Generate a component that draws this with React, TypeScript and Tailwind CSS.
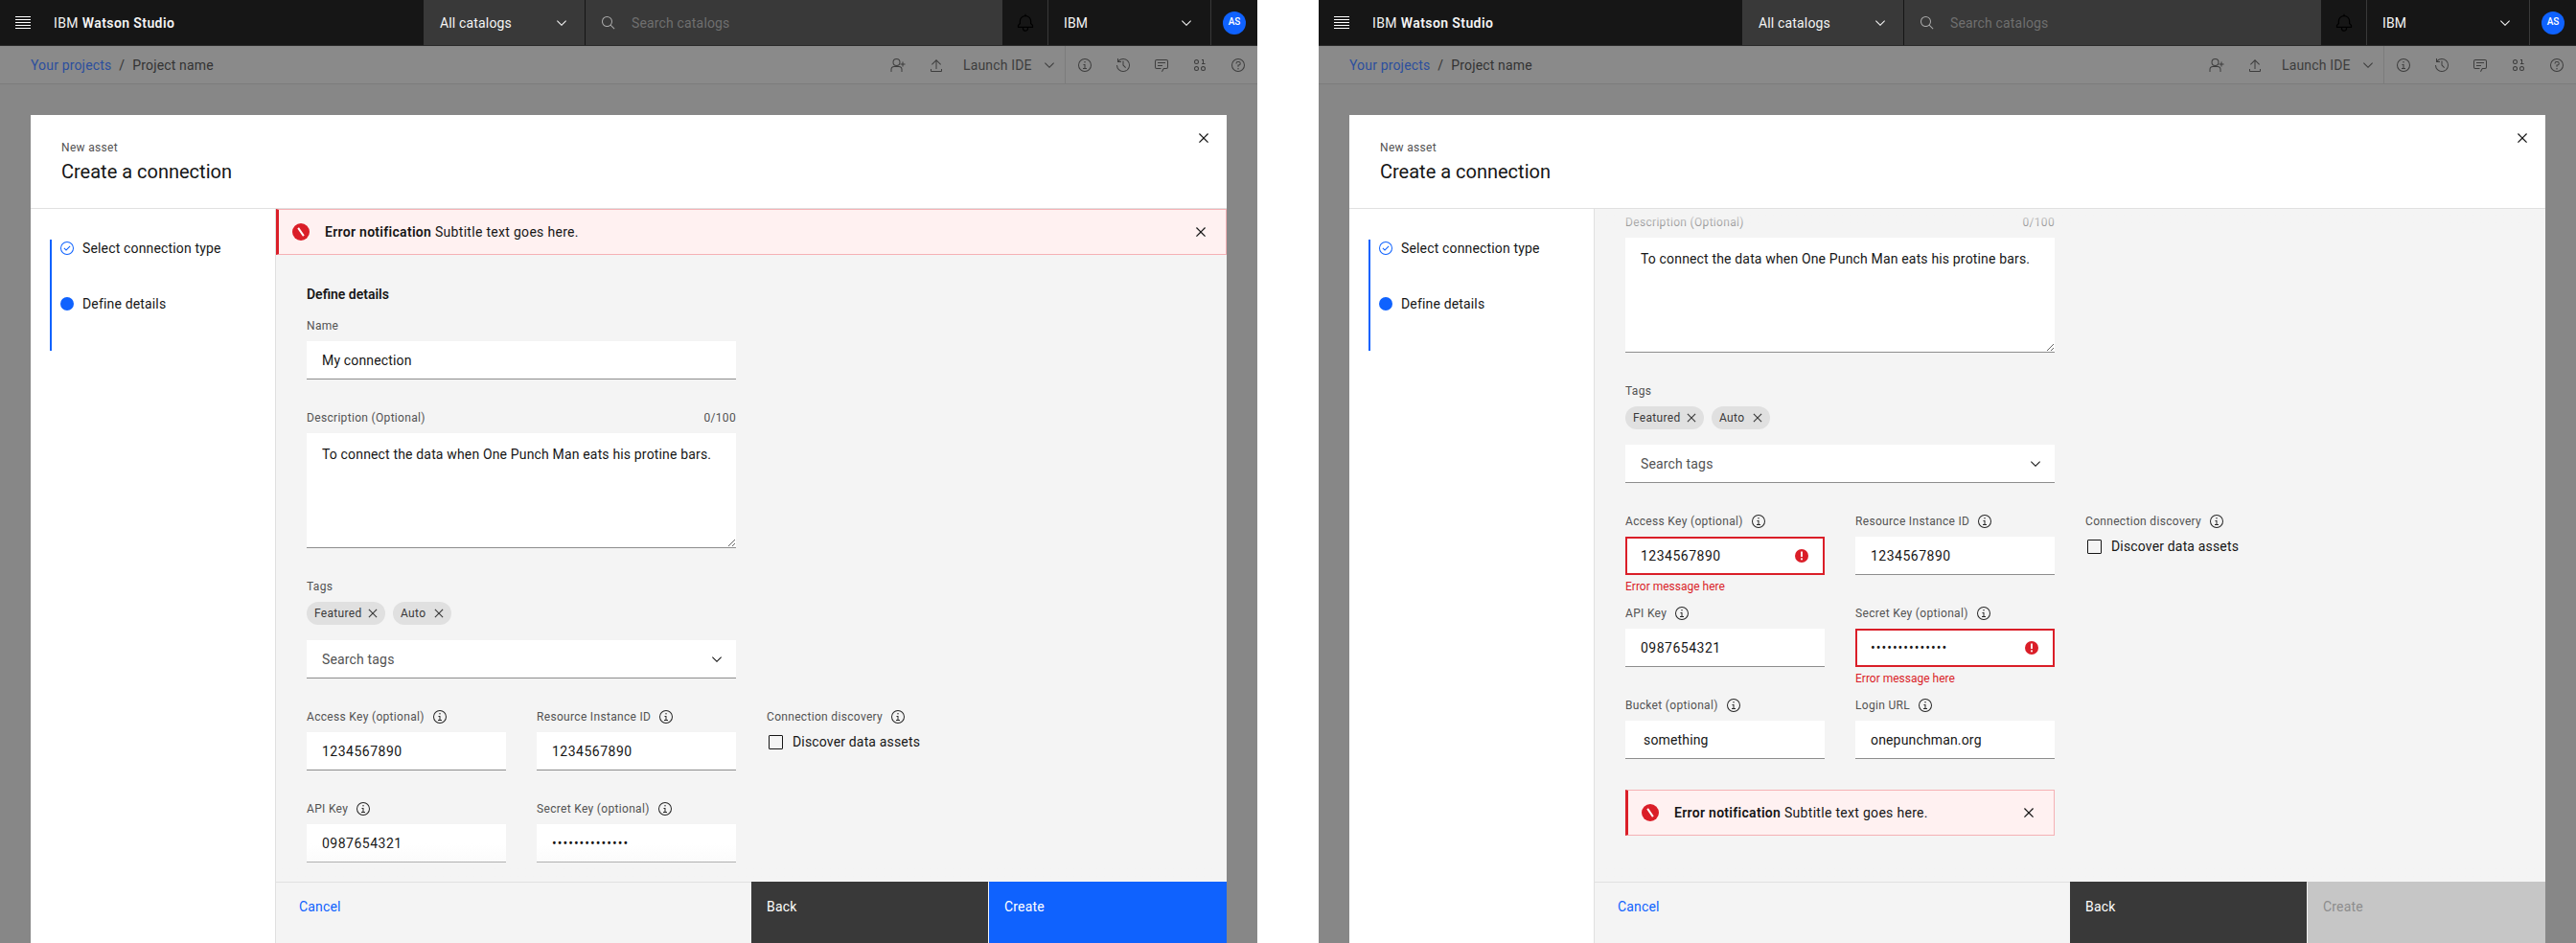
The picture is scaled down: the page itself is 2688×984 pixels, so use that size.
const ICONS: Record<string, string[]> = {
  close: ["M24 9.4L22.6 8 16 14.6 9.4 8 8 9.4 14.6 16 8 22.6 9.4 24 16 17.4 22.6 24 24 22.6 17.4 16 24 9.4z"],
  chevron: ["M16 22L6 12l1.4-1.4 8.6 8.6 8.6-8.6L26 12z"],
  search: ["M29 27.5859l-7.5521-7.5521a11.0177 11.0177 0 1 0-1.4141 1.4141L27.5859 29ZM4 13a9 9 0 1 1 9 9A9.01 9.01 0 0 1 4 13Z"],
  bell: [
    "M28.7071,19.293,26,16.5859V13a10.0136,10.0136,0,0,0-9-9.9492V1H15V3.0508A10.0136,10.0136,0,0,0,6,13v3.5859L3.2929,19.293A1,1,0,0,0,3,20v3a1,1,0,0,0,1,1h7v.7768a5.152,5.152,0,0,0,4.5,5.1987A5.0057,5.0057,0,0,0,21,25V24h7a1,1,0,0,0,1-1V20A1,1,0,0,0,28.7071,19.293ZM19,25a3,3,0,0,1-6,0V24h6Zm8-3H5V20.4141L7.707,17.707A1,1,0,0,0,8,17V13a8,8,0,0,1,16,0v4a1,1,0,0,0,.293.707L27,20.4141Z",
  ],
  info: [
    "M17 22 17 14 13 14 13 16 15 16 15 22 12 22 12 24 20 24 20 22 17 22z",
    "M16,8a1.5,1.5,0,1,0,1.5,1.5A1.5,1.5,0,0,0,16,8Z",
    "M16,30A14,14,0,1,1,30,16,14,14,0,0,1,16,30ZM16,4A12,12,0,1,0,28,16,12,12,0,0,0,16,4Z",
  ],
  help: [
    "M16,2A14,14,0,1,0,30,16,14,14,0,0,0,16,2Zm0,26A12,12,0,1,1,28,16,12,12,0,0,1,16,28Z",
    "M16,22a1.5,1.5,0,1,0,1.5,1.5A1.5,1.5,0,0,0,16,22Z",
    "M17,8H15.5A4.49,4.49,0,0,0,11,12.5V13h2v-.5A2.5,2.5,0,0,1,15.5,10H17a2.5,2.5,0,0,1,0,5H15v4.5h2V17a4.5,4.5,0,0,0,0-9Z",
  ],
  upload: ["M6 14 7.41 15.41 15 7.83 15 24 17 24 17 7.83 24.59 15.41 26 14 16 4 6 14z", "M26 24v4H6V24H4v4a2 2 0 0 0 2 2H26a2 2 0 0 0 2-2V24Z"],
  userAdd: [
    "M13 4a6 6 0 1 1-6 6A6 6 0 0 1 13 4Zm0-2a8 8 0 1 0 8 8A8 8 0 0 0 13 2Z",
    "M3 30H1V25a7 7 0 0 1 7-7H18a7 7 0 0 1 7 7v5H23V25a5 5 0 0 0-5-5H8a5 5 0 0 0-5 5Z",
    "M31 13H27V9H25v4H21v2h4v4h2V15h4Z",
  ],
  history: [
    "M20.59 22 15 16.41 15 7 17 7 17 15.58 22 20.59 20.59 22z",
    "M16,2A13.94,13.94,0,0,0,6,6.23V2H4v8h8V8H7.08A12,12,0,1,1,4,16H2A14,14,0,1,0,16,2Z",
  ],
  chat: [
    "M17.74,30,16,29l4-7h6a2,2,0,0,0,2-2V8a2,2,0,0,0-2-2H6A2,2,0,0,0,4,8V20a2,2,0,0,0,2,2h9v2H6a4,4,0,0,1-4-4V8A4,4,0,0,1,6,4H26a4,4,0,0,1,4,4V20a4,4,0,0,1-4,4H21.16Z",
    "M8 10H24V12H8z",
    "M8 16H18V18H8z",
  ],
  binary: [
    "M9 4a5 5 0 1 0 5 5A5 5 0 0 0 9 4Zm0 8a3 3 0 1 1 3-3A3 3 0 0 1 9 12Z",
    "M9 18a5 5 0 1 0 5 5A5 5 0 0 0 9 18Zm0 8a3 3 0 1 1 3-3A3 3 0 0 1 9 26Z",
    "M23 18a5 5 0 1 0 5 5A5 5 0 0 0 23 18Zm0 8a3 3 0 1 1 3-3A3 3 0 0 1 23 26Z",
    "M24 12V4H20V6h2v6H20v2h7V12Z",
  ],
  check: [
    "M14 21.414 9 16.413 10.413 15 14 18.586 21.585 11 23 12.415 14 21.414z",
    "M16,2A14,14,0,1,0,30,16,14,14,0,0,0,16,2Zm0,26A12,12,0,1,1,28,16,12,12,0,0,1,16,28Z",
  ],
};

const Icon = ({ name, className = "w-4 h-4" }: { name: string; className?: string }) => (
  <svg viewBox="0 0 32 32" fill="currentColor" className={`shrink-0 ${className}`}>
    {ICONS[name].map((d) => (
      <path key={d} d={d} />
    ))}
  </svg>
);

const ErrorFilled = () => (
  <svg viewBox="0 0 18 18" className="w-[18px] h-[18px] shrink-0">
    <circle cx="9" cy="9" r="9" fill="#da1e28" />
    <rect x="-5" y="-1" width="10" height="2" fill="#fff" transform="translate(9 9) rotate(55)" />
  </svg>
);

const WarningFilled = () => (
  <svg viewBox="0 0 16 16" className="w-4 h-4 shrink-0">
    <circle cx="8" cy="8" r="7" fill="#da1e28" />
    <rect x="7.1" y="3.5" width="1.8" height="5.5" fill="#fff" />
    <rect x="7.1" y="10.4" width="1.8" height="1.9" fill="#fff" />
  </svg>
);

const Notification = ({ className = "" }: { className?: string }) => (
  <div
    className={`flex items-center h-12 shrink-0 bg-[#fff1f1] border border-[#f5b1b5] border-l-[3px] border-l-[#da1e28] pl-[14px] pr-4 text-sm text-[#161616] ${className}`}
  >
    <ErrorFilled />
    <p className="ml-2 pl-2 flex-1 tracking-[0.3px]">
      <span className="font-semibold">Error notification</span> Subtitle text goes here.
    </p>
    <Icon name="close" className="w-5 h-5" />
  </div>
);

const Label = ({ text, info = true }: { text: string; info?: boolean }) => (
  <div className="flex items-center gap-2 h-4 text-xs text-[#525252] tracking-[0.32px]">
    <span>{text}</span>
    {info && <Icon name="info" className="w-4 h-4 text-[#262626]" />}
  </div>
);

interface FieldProps {
  label: string;
  value: string;
  type?: string;
  tracking?: string;
  error?: boolean;
  inset?: boolean;
}

const Field = ({ label, value, type = "text", tracking = "tracking-[0.16px]", error, inset }: FieldProps) => (
  <div>
    <Label text={label} />
    <div className="relative mt-2">
      <input
        readOnly
        type={type}
        value={value}
        className={`w-full h-10 bg-white text-sm text-[#161616] outline-none ${tracking} ${inset ? "pl-[19px]" : ""} ${
          error ? "border-2 border-[#da1e28] pl-[14px]" : "border-b border-[#8d8d8d]"
        } ${!inset && !error ? "pl-4" : ""}`}
      />
      {error && (
        <span className="absolute right-4 top-3">
          <WarningFilled />
        </span>
      )}
    </div>
    {error && <p className="mt-1 h-4 text-xs text-[#da1e28]">Error message here</p>}
  </div>
);

const Chip = ({ text, className }: { text: string; className: string }) => (
  <span
    className={`flex items-center justify-between h-6 rounded-full bg-[#e0e0e0] text-xs text-[#393939] tracking-[0.32px] ${className}`}
  >
    {text}
    <Icon name="close" className="w-[18px] h-[18px]" />
  </span>
);

const ConnectionForm = ({ withErrors }: { withErrors: boolean }) => (
  <div className="w-[448px] ml-8">
    {!withErrors && (
      <>
        <h3 className="mt-[31px] h-5 leading-5 text-sm font-semibold text-[#161616]">Define details</h3>
        <div className="mt-[15px]">
          <Label text="Name" info={false} />
          <input
            readOnly
            value="My connection"
            className="mt-2 w-full h-10 pl-4 bg-white border-b border-[#8d8d8d] text-sm text-[#161616] tracking-[0.16px] outline-none"
          />
        </div>
      </>
    )}

    <div className={withErrors ? "pt-[6px]" : "mt-8"}>
      <div className="flex justify-between h-4 text-xs text-[#525252] tracking-[0.32px]">
        <span>Description (Optional)</span>
        <span>0/100</span>
      </div>
      <textarea
        readOnly
        defaultValue="To connect the data when One Punch Man eats his protine bars."
        className="block mt-2 w-full h-[120px] py-3 px-4 bg-white border-b border-[#8d8d8d] text-sm leading-5 text-[#161616] tracking-[0.16px] outline-none resize-y"
      />
    </div>

    <div className="mt-8">
      <Label text="Tags" info={false} />
      <div className="flex gap-2 mt-2">
        <Chip text="Featured" className="w-[82px] pl-2 pr-1" />
        <Chip text="Auto" className="w-[61px] pl-2 pr-1" />
      </div>
      <div className="flex items-center justify-between mt-4 h-10 pl-4 pr-3 bg-white border-b border-[#8d8d8d] text-sm text-[#525252] tracking-[0.16px]">
        Search tags
        <Icon name="chevron" className="w-4 h-4 text-[#161616]" />
      </div>
    </div>

    <div className="grid grid-cols-[208px_208px_224px] gap-x-8 auto-rows-[96px] mt-8">
      <Field label="Access Key (optional)" value="1234567890" tracking="tracking-[0.5px]" error={withErrors} />
      <Field label="Resource Instance ID" value="1234567890" tracking="tracking-[0.5px]" />
      <div>
        <Label text="Connection discovery" />
        <label className="flex items-center gap-[10px] mt-2 h-5 pl-[2px] text-sm text-[#161616] tracking-[0.16px]">
          <span className="w-[15px] h-[15px] border border-[#161616] rounded-[1px]" />
          Discover data assets
        </label>
      </div>
      <Field label="API Key" value="0987654321" tracking="tracking-[0.5px]" />
      <Field
        label="Secret Key (optional)"
        value="12345678901234"
        type="password"
        tracking="tracking-[1px]"
        error={withErrors}
      />
      <div />
      {withErrors && (
        <>
          <Field label="Bucket (optional)" value="something" inset />
          <Field label="Login URL" value="onepunchman.org" />
          <div />
        </>
      )}
    </div>

    {withErrors && <Notification />}
  </div>
);

const Screen = ({ withErrors = false }: { withErrors?: boolean }) => (
  <div className="flex flex-col w-[1312px] h-[984px] shrink-0 bg-[#878787] overflow-hidden">
    <header className="flex h-12 shrink-0 bg-[#161616] text-sm text-[#f4f4f4] border-b border-[#2b2b2b]">
      <div className="flex items-center w-[442px] shrink-0 pl-4">
        <svg viewBox="0 0 16 16" className="w-4 h-4 text-white" fill="currentColor">
          <path d="M0 1h16v1H0zM0 4h16v1H0zM0 7h16v1H0zM0 10h16v1H0zM0 13h16v1H0z" />
        </svg>
        <span className="ml-6 tracking-[0.4px]">
          IBM <span className="font-semibold">Watson Studio</span>
        </span>
      </div>
      <div className="flex items-center justify-between w-[168px] shrink-0 pl-[17px] pr-4 bg-[#393939] tracking-[0.16px]">
        All catalogs
        <Icon name="chevron" />
      </div>
      <div className="w-px bg-[#161616]" />
      <div className="flex items-center w-[435px] shrink-0 pl-4 bg-[#393939] text-[#6f6f6f] tracking-[0.16px]">
        <Icon name="search" className="w-4 h-4 text-[#a8a8a8]" />
        <span className="ml-4">Search catalogs</span>
      </div>
      <div className="flex items-center justify-center w-12 shrink-0 text-black border-r border-[#393939]">
        <Icon name="bell" className="w-5 h-5" />
      </div>
      <div className="flex items-center justify-between w-[170px] shrink-0 pl-4 pr-[17px] border-r border-[#393939] tracking-[0.16px]">
        IBM
        <Icon name="chevron" />
      </div>
      <div className="flex items-center justify-center flex-1">
        <span className="flex items-center justify-center w-6 h-6 rounded-full bg-[#0f62fe] text-white text-[10px] font-medium">
          AS
        </span>
      </div>
    </header>

    <nav className="flex items-center h-10 shrink-0 bg-[#8a8a8a] border-b border-[#7c7c7c] text-sm text-[#333333] tracking-[0.16px]">
      <div className="flex-1 pl-8">
        <span className="text-[#2c4f9e]">Your projects</span>
        <span className="mx-2">/</span>
        <span>Project name</span>
      </div>
      <div className="flex items-center text-[#3d3d3d]">
        <span className="flex justify-center w-10">
          <Icon name="userAdd" />
        </span>
        <span className="flex justify-center w-10">
          <Icon name="upload" />
        </span>
        <span className="flex items-center w-[115px] h-[39px] pl-2 border-r border-[#7c7c7c]">
          <span className="flex-1">Launch IDE</span>
          <Icon name="chevron" className="w-4 h-4 mr-2" />
        </span>
        {["info", "history", "chat", "binary", "help"].map((name) => (
          <span key={name} className="flex justify-center w-10">
            <Icon name={name} />
          </span>
        ))}
      </div>
    </nav>

    <main className="flex-1 min-h-0 px-8 pt-8">
      <div className="flex flex-col h-full bg-white">
        <div className="relative h-[98px] shrink-0 border-b border-[#e0e0e0] pl-8 pt-[25px]">
          <p className="h-[18px] leading-[18px] text-xs text-[#525252] tracking-[0.32px]">New asset</p>
          <h2 className="mt-[2px] text-xl leading-7 text-[#161616]">Create a connection</h2>
          <span className="absolute right-[14px] top-[14px] text-[#161616]">
            <Icon name="close" className="w-5 h-5" />
          </span>
        </div>

        <div className="flex flex-1 min-h-0">
          <aside className="w-[256px] shrink-0 border-r border-[#e0e0e0] pl-5 pt-8">
            <ol className="flex flex-col gap-10 h-[116px] pl-2 border-l-2 border-[#0f62fe] text-sm text-[#161616] tracking-[0.16px]">
              <li className="flex items-center gap-2 h-[18px]">
                <Icon name="check" className="w-4 h-4 text-[#0f62fe]" />
                Select connection type
              </li>
              <li className="flex items-center gap-2 h-[18px]">
                <span className="w-[14px] h-[14px] mx-px rounded-full bg-[#0f62fe]" />
                Define details
              </li>
            </ol>
          </aside>

          <section className="flex flex-col flex-1 min-w-0 bg-[#f4f4f4]">
            <div className="relative flex-1 min-h-0 overflow-hidden">
              {!withErrors && <Notification />}
              <ConnectionForm withErrors={withErrors} />
              {withErrors && (
                <div className="absolute top-0 inset-x-0 h-8 bg-gradient-to-b from-[#f4f4f4] to-transparent" />
              )}
              <div className="absolute bottom-0 inset-x-0 h-10 bg-gradient-to-t from-[#f4f4f4]/70 to-transparent" />
            </div>
            <footer className="flex h-16 shrink-0 border-t border-[#e0e0e0] text-sm tracking-[0.16px]">
              <span className="flex-1 pl-6 pt-[15px] text-[#0f62fe]">Cancel</span>
              <span className="w-[247px] -mt-px pl-4 pt-4 bg-[#393939] text-white">Back</span>
              <span
                className={`w-[248px] -mt-px ml-px pl-4 pt-4 ${withErrors ? "bg-[#c6c6c6] text-[#8d8d8d]" : "bg-[#0f62fe] text-white"}`}
              >
                Create
              </span>
            </footer>
          </section>
        </div>
      </div>
    </main>
  </div>
);

const App = () => (
  <div className="flex gap-16 w-[2688px] h-[984px] bg-white font-['Roboto',sans-serif]">
    <Screen />
    <Screen withErrors />
  </div>
);

export default App;
